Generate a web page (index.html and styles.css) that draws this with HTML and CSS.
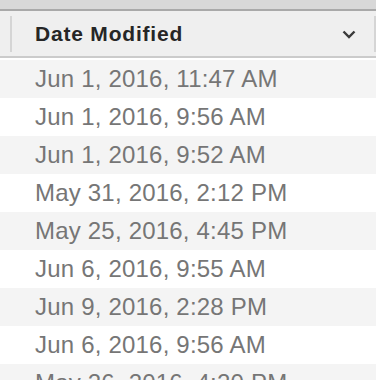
FILE: index.html
```html
<!doctype html>
<html>
<head>
    <link rel="stylesheet" href="styles.css">
</head>
<body>
<div id="list">
    <div class="topbar"></div>
    <div class="header">
        <span class="sep"></span>
        <span class="title">Date Modified</span>
        <svg class="chevron" width="14" height="9" viewBox="0 0 14 9">
            <path d="M1.5 1.5 L7 7 L12.5 1.5" fill="none" stroke="#3a3a3a" stroke-width="2.4"/>
        </svg>
        <span class="sep"></span>
    </div>
    <div class="rows">
        <div class="row">Jun 1, 2016, 11:47 AM</div>
        <div class="row">Jun 1, 2016, 9:56 AM</div>
        <div class="row">Jun 1, 2016, 9:52 AM</div>
        <div class="row">May 31, 2016, 2:12 PM</div>
        <div class="row">May 25, 2016, 4:45 PM</div>
        <div class="row">Jun 6, 2016, 9:55 AM</div>
        <div class="row">Jun 9, 2016, 2:28 PM</div>
        <div class="row">Jun 6, 2016, 9:56 AM</div>
        <div class="row">May 26, 2016, 4:20 PM</div>
    </div>
</div>
</body>
</html>
```

FILE: styles.css
```css
html, body {
    margin: 0;
    height: 100%;
    overflow: hidden;
    background: #ffffff;
}
#list {
    width: 376px;
    font-family: "Liberation Sans", Arial, sans-serif;
}
.topbar {
    height: 9px;
    background: #d8d8d8;
    border-bottom: 2px solid #a9a9a9;
}
.header {
    height: 45px;
    background: #efefef;
    border-bottom: 2px solid #cbcbcb;
    display: flex;
    align-items: center;
    margin-bottom: 2px;
}
.sep {
    width: 2px;
    height: 36px;
    background: #d5d5d5;
}
.header .sep:first-child {
    margin-left: 10px;
}
.title {
    flex: 1;
    margin-left: 23px;
    font-size: 21px;
    font-weight: bold;
    letter-spacing: 0.8px;
    color: #262626;
}
.chevron {
    margin-right: 18px;
    margin-top: 2px;
}
.row {
    height: 38px;
    line-height: 38px;
    padding-left: 35px;
    font-size: 24px;
    letter-spacing: 0.2px;
    color: #767676;
    white-space: nowrap;
}
.row:nth-child(odd) {
    background: #f4f4f4;
}
```
